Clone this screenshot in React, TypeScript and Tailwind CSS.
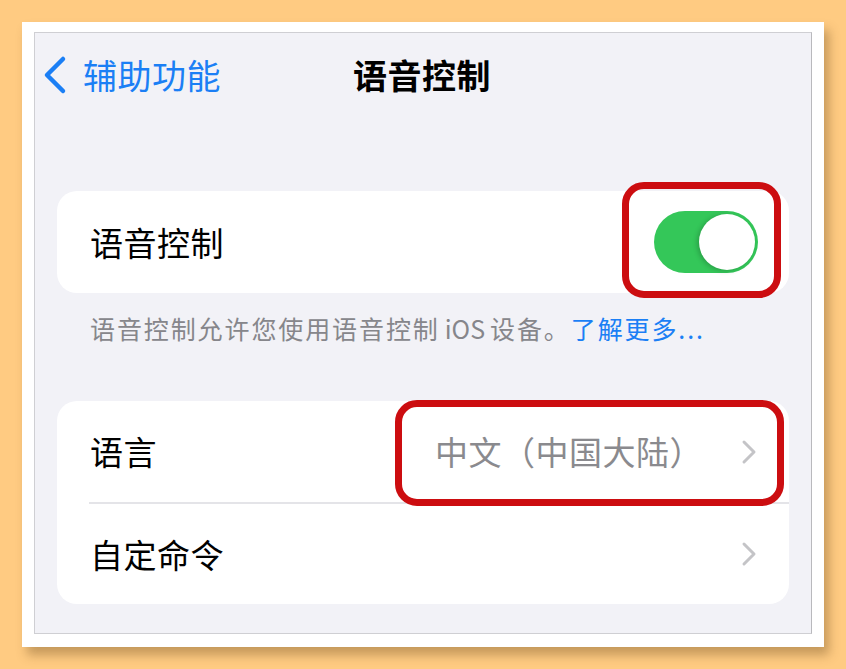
import React from 'react';

const FONT = { fontFamily: '"Noto Sans CJK SC", "Noto Sans", sans-serif' };

const Chevron: React.FC = () => (
  <svg width="16" height="26" viewBox="0 0 16 26" fill="none" className="shrink-0">
    <path d="M3 3l10 10-10 10" stroke="#c4c4c7" strokeWidth="3" strokeLinecap="round" strokeLinejoin="round" />
  </svg>
);

const App: React.FC = () => {
  return (
    <div className="w-[846px] h-[669px] bg-[#ffcb82] pt-[22px] pl-[22px] overflow-hidden" style={FONT}>
      <div className="w-[802px] h-[625px] bg-white pt-[10px] pl-[12px] shadow-[5px_8px_10px_rgba(90,60,20,0.35)]">
        <div className="relative w-[778px] h-[602px] bg-[#f2f2f7] border border-[#cfcfd3] border-r-[#b9b9bd]">
          {/* nav */}
          <div className="relative h-[84px] flex items-center">
            <div className="flex items-center pl-[7px] text-[#1b7ff5]">
              <svg width="26" height="40" viewBox="0 0 26 40" fill="none">
                <path d="M21 4L5 20l16 16" stroke="#1b7ff5" strokeWidth="4.5" strokeLinecap="round" strokeLinejoin="round" />
              </svg>
              <span className="ml-[15px] text-[34px] leading-none tracking-[0.5px]">辅助功能</span>
            </div>
            <div className="absolute inset-0 flex items-center justify-center pointer-events-none">
              <span className="text-[34px] font-bold leading-none text-black tracking-[0.5px] ml-[-2px]">语音控制</span>
            </div>
          </div>

          {/* card 1 */}
          <div className="mt-[74px] mx-[22px] h-[102px] bg-white rounded-[20px] flex items-center justify-between pl-[33px] pr-[31px]">
            <span className="text-[33px] leading-none text-black tracking-[0.5px]">语音控制</span>
            <div className="w-[104px] h-[62px] rounded-full bg-[#34c759] flex items-center justify-end pr-[3px]">
              <div className="w-[56px] h-[56px] rounded-full bg-white shadow-[-2px_1px_5px_rgba(0,0,0,0.2)]" />
            </div>
          </div>

          {/* footer */}
          <div className="mt-[22px] pl-[55px] text-[25px] leading-[26px] text-[#86868b] tracking-[1.9px] whitespace-nowrap">
            语音控制允许您使用语音控制<span className="mx-[5px] tracking-normal">iOS</span>设备。<span className="text-[#1b7ff5]">了解更多...</span>
          </div>

          {/* card 2 */}
          <div className="mt-[60px] mx-[22px] bg-white rounded-[20px] overflow-hidden">
            <div className="h-[101px] flex items-center justify-between pl-[33px] pr-[32px]">
              <span className="text-[33px] leading-none text-black tracking-[0.5px]">语言</span>
              <div className="flex items-center gap-[38px]">
                <span className="text-[33px] leading-none text-[#8a8a8e] tracking-[0.5px]">中文（中国大陆）</span>
                <Chevron />
              </div>
            </div>
            <div className="ml-[32px] h-[2px] bg-[#e4e4e8]" />
            <div className="h-[100px] flex items-center justify-between pl-[33px] pr-[32px]">
              <span className="text-[33px] leading-none text-black tracking-[0.5px]">自定命令</span>
              <Chevron />
            </div>
          </div>

          {/* red highlight boxes */}
          <div className="absolute left-[587px] top-[149px] w-[159px] h-[116px] border-[7px] border-[#cc0d10] rounded-[22px]" />
          <div className="absolute left-[360px] top-[367px] w-[389px] h-[106px] border-[7px] border-[#cc0d10] rounded-[22px]" />
        </div>
      </div>
    </div>
  );
};

export default App;
